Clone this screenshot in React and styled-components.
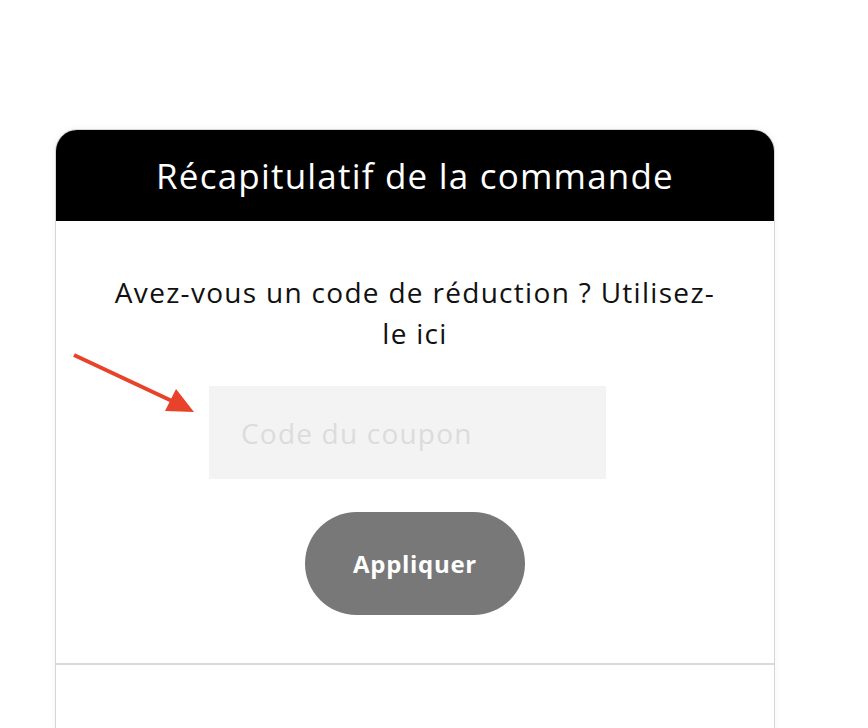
import React from 'react'
import styled, { createGlobalStyle } from 'styled-components'

const GlobalStyle = createGlobalStyle`
  html, body {
    margin: 0;
    padding: 0;
    background: #fff;
    font-family: "Open Sans", "Liberation Sans", sans-serif;
  }
`;

const Page = styled.div`
  position: relative;
  height: 728px;
  overflow: hidden;
  padding: 129px 0 0 55px;
  box-sizing: border-box;
`;

const Card = styled.div`
  width: 718px;
  border: 1px solid #d6d6d6;
  border-radius: 22px 22px 0 0;
  overflow: hidden;
  background: #fff;
  box-shadow: 0 0 8px rgba(0, 0, 0, 0.05);
`;

const Header = styled.div`
  height: 91px;
  background: #000;
  color: #fff;
  display: flex;
  align-items: center;
  justify-content: center;
  h2 {
    margin: 0;
    font-size: 35px;
    font-weight: 400;
    letter-spacing: 1.2px;
  }
`;

const Coupon = styled.div`
  display: flex;
  flex-direction: column;
  align-items: center;
  padding: 51px 0 48px;
  border-bottom: 2px solid #dadada;
`;

const Question = styled.p`
  width: 610px;
  margin: 0 0 32px;
  font-size: 28px;
  line-height: 41px;
  text-align: center;
  color: #111;
  letter-spacing: 1.3px;
`;

const CodeInput = styled.input`
  width: 397px;
  height: 93px;
  box-sizing: border-box;
  margin-right: 15px;
  border: none;
  outline: none;
  background: #f3f3f3;
  padding: 0 32px;
  font-family: "Open Sans", "Liberation Sans", sans-serif;
  font-size: 28px;
  letter-spacing: 1.2px;
  color: #333;
  &::placeholder {
    color: #dcdcdc;
  }
`;

const ApplyButton = styled.button`
  margin-top: 33px;
  width: 220px;
  height: 103px;
  border: none;
  border-radius: 52px;
  background: #787878;
  color: #fff;
  font-family: "Open Sans", "Liberation Sans", sans-serif;
  font-weight: 700;
  font-size: 24px;
  letter-spacing: 0.7px;
  cursor: pointer;
`;

const Rest = styled.div`
  height: 120px;
`;

const Arrow = styled.svg`
  position: absolute;
  left: 0;
  top: 0;
  pointer-events: none;
`;

const App = () => {
  return (
    <Page>
      <GlobalStyle />
      <Card>
        <Header>
          <h2>Récapitulatif de la commande</h2>
        </Header>
        <Coupon>
          <Question>Avez-vous un code de réduction ? Utilisez-le ici</Question>
          <CodeInput placeholder="Code du coupon" />
          <ApplyButton>Appliquer</ApplyButton>
        </Coupon>
        <Rest />
      </Card>
      <Arrow width="868" height="728" viewBox="0 0 868 728">
        <line x1="74" y1="355" x2="172" y2="401" stroke="#e8432a" strokeWidth="4" />
        <polygon points="165,411 176,389 194,412" fill="#e8432a" />
      </Arrow>
    </Page>
  )
}

export default App
